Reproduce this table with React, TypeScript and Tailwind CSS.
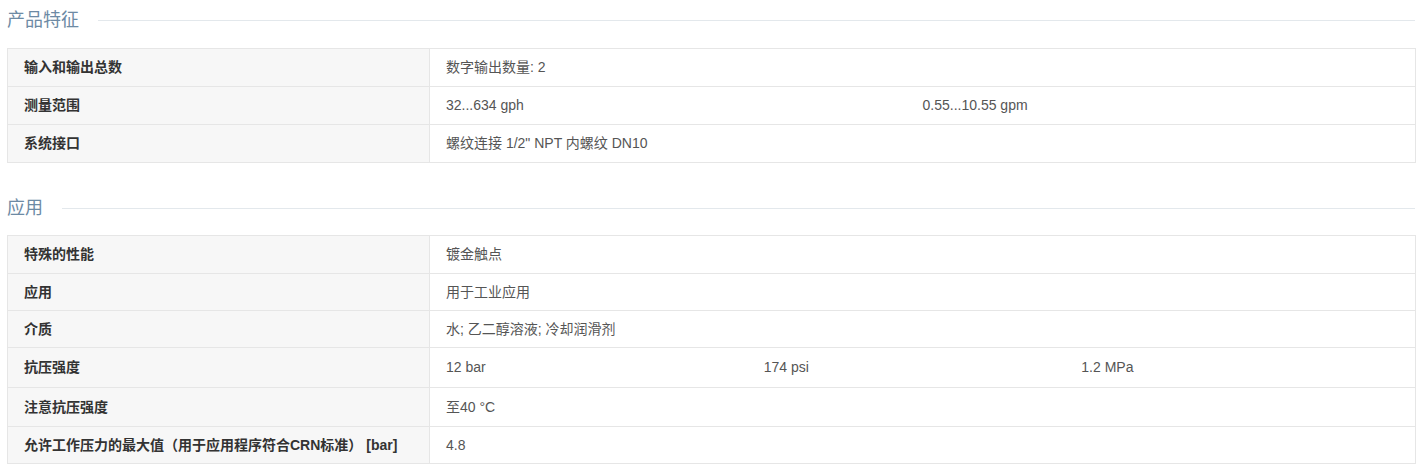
const font = { fontFamily: '"Liberation Sans", "Noto Sans CJK SC", sans-serif' }

type Row = { label: string; values: string[]; h: string }

const features: Row[] = [
  { label: '输入和输出总数', values: ['数字输出数量: 2'], h: 'h-[37px]' },
  { label: '测量范围', values: ['32...634 gph', '0.55...10.55 gpm'], h: 'h-[37px]' },
  { label: '系统接口', values: ['螺纹连接 1/2" NPT 内螺纹 DN10'], h: 'h-[37px]' },
]

const application: Row[] = [
  { label: '特殊的性能', values: ['镀金触点'], h: 'h-[37px]' },
  { label: '应用', values: ['用于工业应用'], h: 'h-[36px]' },
  { label: '介质', values: ['水; 乙二醇溶液; 冷却润滑剂'], h: 'h-[36px]' },
  { label: '抗压强度', values: ['12 bar', '174 psi', '1.2 MPa'], h: 'h-[39px]' },
  { label: '注意抗压强度', values: ['至40 °C'], h: 'h-[38px]' },
  { label: '允许工作压力的最大值（用于应用程序符合CRN标准） [bar]', values: ['4.8'], h: 'h-[36px]' },
]

function SectionTitle({ title }: { title: string }) {
  return (
    <div className="flex items-center h-[24px] pl-[7px] pr-[8px]">
      <span className="text-[18px] leading-[24px] text-[#6d8aa4] whitespace-nowrap">{title}</span>
      <div className="flex-1 h-px bg-[#e3e8ec] ml-[19px]"></div>
    </div>
  )
}

function SpecTable({ rows }: { rows: Row[] }) {
  return (
    <div className="ml-[7px] w-[1409px] border border-[#e6e6e6]">
      {rows.map((row, i) => (
        <div
          key={row.label}
          className={'grid grid-cols-[422px_1fr] ' + (i < rows.length - 1 ? 'border-b border-[#e6e6e6]' : '')}
        >
          <div className={'flex items-center bg-[#f7f7f7] border-r border-[#e6e6e6] px-4 text-[14px] font-bold text-[#333] whitespace-nowrap ' + row.h}>
            {row.label}
          </div>
          <div
            className={
              'grid items-center px-4 text-[14px] text-[#555] ' +
              row.h +
              (row.values.length === 3 ? ' grid-cols-3' : row.values.length === 2 ? ' grid-cols-2' : ' grid-cols-1')
            }
          >
            {row.values.map((v) => (
              <span key={v}>{v}</span>
            ))}
          </div>
        </div>
      ))}
    </div>
  )
}

export default function App() {
  return (
    <div className="w-[1423px] h-[470px] bg-white overflow-hidden pt-[8px]" style={font}>
      <SectionTitle title="产品特征" />
      <div className="h-[16px]"></div>
      <SpecTable rows={features} />
      <div className="h-[33px]"></div>
      <SectionTitle title="应用" />
      <div className="h-[15px]"></div>
      <SpecTable rows={application} />
    </div>
  )
}
